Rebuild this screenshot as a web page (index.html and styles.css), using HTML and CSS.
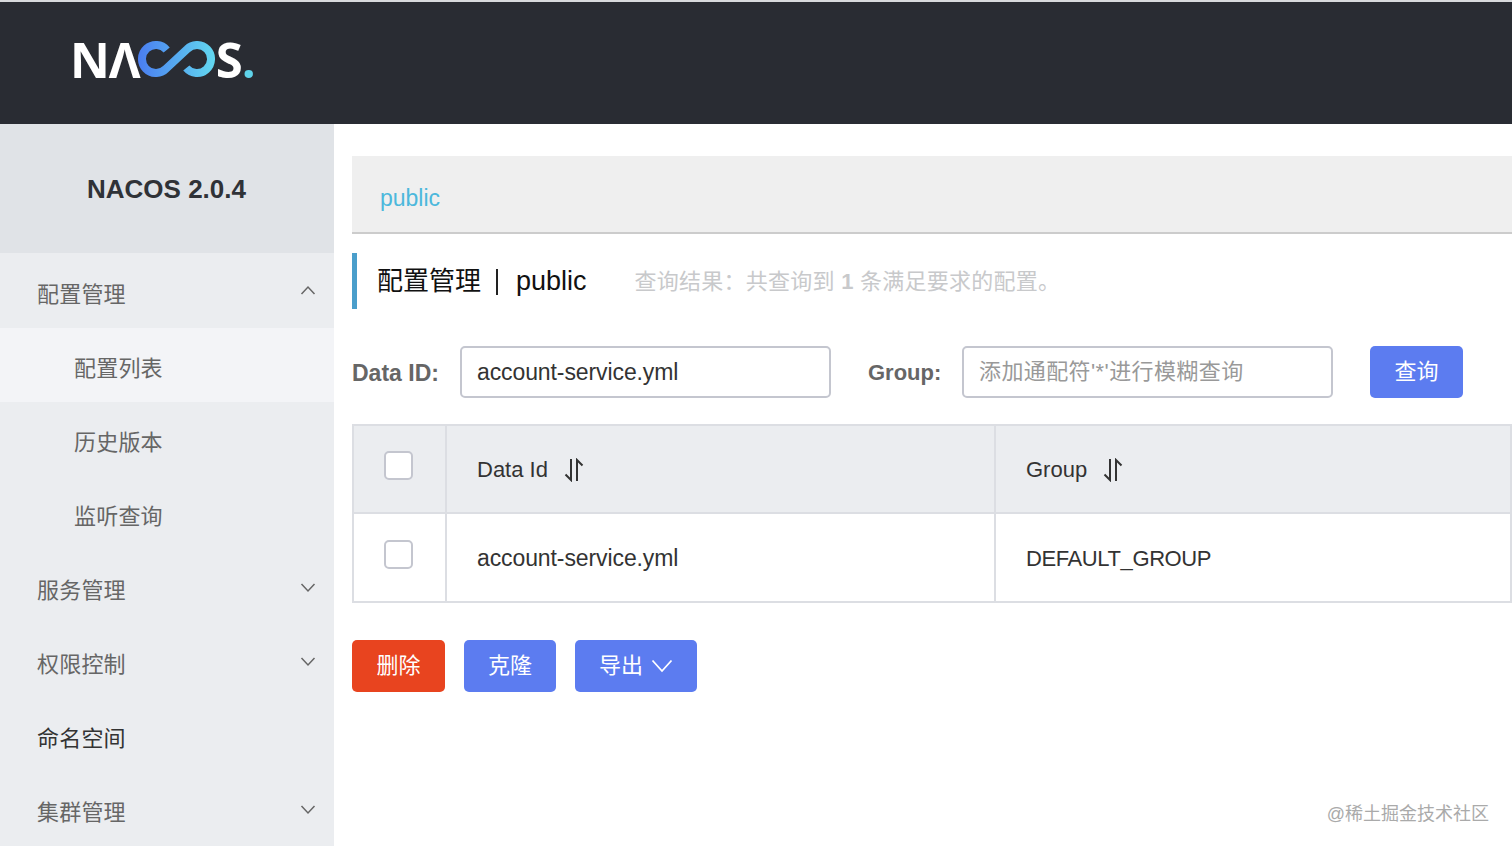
FILE: index.html
```html
<!DOCTYPE html>
<html>
<head>
    <title>Nacos</title>
    <link rel="stylesheet" href="styles.css">
</head>
<body>
    <div class="header">
        <div class="logo">
            <span>NΛ</span>
            <svg class="logo-loop" width="77" height="36" viewBox="0 0 77 36">
                <defs>
                    <linearGradient id="loop" gradientUnits="userSpaceOnUse" x1="0" y1="0" x2="77" y2="0">
                        <stop offset="0" stop-color="#4a7df0"/>
                        <stop offset="1" stop-color="#62d8f0"/>
                    </linearGradient>
                </defs>
                <path d="M28.700 9 A14 14 0 1 0 27.900 27.900 L49.100 8.100 A14 14 0 1 1 48.300 27" fill="none" stroke="url(#loop)" stroke-width="8"/>
            </svg>
            <span>S</span><span class="logo-dot">.</span>
        </div>
    </div>
    <div class="layout">
        <div class="sidebar">
            <div class="sidebar-title">NACOS 2.0.4</div>
            <div class="menu-item">配置管理
                <svg class="chevron up" width="16" height="10" viewBox="0 0 16 10"><path d="M1.500 9 L8 2 L14.500 9"/></svg>
            </div>
            <div class="menu-item sub active">配置列表</div>
            <div class="menu-item sub">历史版本</div>
            <div class="menu-item sub">监听查询</div>
            <div class="menu-item">服务管理
                <svg class="chevron" width="16" height="10" viewBox="0 0 16 10"><path d="M1.500 1 L8 8 L14.500 1"/></svg>
            </div>
            <div class="menu-item">权限控制
                <svg class="chevron" width="16" height="10" viewBox="0 0 16 10"><path d="M1.500 1 L8 8 L14.500 1"/></svg>
            </div>
            <div class="menu-item dark">命名空间</div>
            <div class="menu-item">集群管理
                <svg class="chevron" width="16" height="10" viewBox="0 0 16 10"><path d="M1.500 1 L8 8 L14.500 1"/></svg>
            </div>
        </div>
        <div class="main">
            <div class="namespace"><a class="namespace-link">public</a></div>
            <div class="page-title">
                <span class="page-name">配置管理</span>
                <span class="page-sep"></span>
                <span class="page-ns">public</span>
                <span class="page-hint">查询结果：共查询到 <b>1</b> 条满足要求的配置。</span>
            </div>
            <div class="search">
                <label class="search-label">Data ID:</label>
                <div class="field">account-service.yml</div>
                <label class="search-label group-label">Group:</label>
                <div class="field placeholder">添加通配符'*'进行模糊查询</div>
                <div class="btn primary search-btn">查询</div>
            </div>
            <table class="config-table">
                <tr class="head">
                    <td class="check-col"><span class="checkbox"></span></td>
                    <td class="id-col">Data Id
                        <svg class="sort" width="20" height="24" viewBox="0 0 20 24"><path d="M7 1 V22 L1.500 16.500 M13 23 V2 L18.500 7.500"/></svg>
                    </td>
                    <td>Group
                        <svg class="sort" width="20" height="24" viewBox="0 0 20 24"><path d="M7 1 V22 L1.500 16.500 M13 23 V2 L18.500 7.500"/></svg>
                    </td>
                </tr>
                <tr>
                    <td class="check-col"><span class="checkbox"></span></td>
                    <td class="id-col cell-id">account-service.yml</td>
                    <td class="cell-group">DEFAULT_GROUP</td>
                </tr>
            </table>
            <div class="actions">
                <div class="btn danger">删除</div>
                <div class="btn primary clone">克隆</div>
                <div class="btn primary export">导出
                    <svg width="22" height="14" viewBox="0 0 22 14"><path d="M1.500 1.500 L11 12 L20.500 1.500"/></svg>
                </div>
            </div>
        </div>
    </div>
    <div class="watermark">@稀土掘金技术社区</div>
</body>
</html>
```

FILE: styles.css
```css
html, body {
    margin: 0;
    height: 100%;
    overflow: hidden;
}
body {
    font-family: "Liberation Sans", "Noto Sans CJK SC", sans-serif;
    color: #333;
    background-color: #fff;
}
.header {
    height: 114px;
    background-color: #292c33;
    border-top: 2px solid #d8dadd;
    display: flex;
    align-items: center;
    padding: 0 0 8px 70px;
}
.logo {
    display: flex;
    align-items: center;
    font-family: "Open Sans", "Liberation Sans", sans-serif;
    font-size: 49px;
    font-weight: 700;
    line-height: 50px;
    color: #fff;
    letter-spacing: -1px;
}
.logo-loop {
    margin: 0 1px 0 -2px;
}
.logo-dot {
    color: #5fd3ea;
}
.layout {
    display: flex;
    height: 722px;
}
.sidebar {
    width: 334px;
    flex-shrink: 0;
    background-color: #ebedf0;
}
.sidebar-title {
    height: 129px;
    line-height: 130px;
    padding-right: 1px;
    text-align: center;
    font-size: 26px;
    font-weight: bold;
    color: #2f3237;
    background-color: #e0e3e7;
}
.menu-item {
    height: 72px;
    display: flex;
    align-items: center;
    justify-content: space-between;
    padding: 2px 18px 0 37px;
    font-size: 22px;
    letter-spacing: 0.200px;
    color: #666;
}
.menu-item:nth-child(2) {
    margin-top: 1px;
}
.sub {
    padding-left: 74px;
}
.active {
    background-color: #f3f4f7;
}
.dark {
    color: #333;
}
.chevron {
    margin-top: 0;
}
.chevron.up {
    margin-top: -4px;
}
.chevron path {
    fill: none;
    stroke: #666;
    stroke-width: 1.500;
}
.main {
    flex: 1;
    min-width: 0;
    padding: 32px 0 0 18px;
}
.namespace {
    height: 76px;
    background-color: #efefef;
    border-bottom: 2px solid #ccc;
    padding-left: 28px;
    font-size: 23px;
    line-height: 84px;
}
.namespace-link {
    color: #4cb8dc;
}
.page-title {
    margin-top: 19px;
    height: 56px;
    border-left: 5px solid #4a9ecb;
    padding-left: 20px;
    display: flex;
    align-items: center;
    color: #111;
}
.page-name {
    font-size: 26px;
    margin-bottom: 6px;
}
.page-sep {
    width: 2px;
    height: 26px;
    margin: 2px 18px 0 15px;
    background-color: #222;
}
.page-ns {
    font-size: 27px;
}
.page-hint {
    margin: 0 0 4px 48px;
    font-size: 22px;
    letter-spacing: 0.250px;
    color: #c8c9cb;
}
.search {
    margin-top: 37px;
    display: flex;
    align-items: center;
}
.search-label {
    width: 108px;
    font-size: 23px;
    font-weight: bold;
    color: #666;
    padding-top: 2px;
}
.group-label {
    width: 94px;
    margin-left: 37px;
    font-size: 22px;
}
.field {
    height: 48px;
    line-height: 48px;
    padding: 0 0 0 15px;
    width: 352px;
    border: 2px solid #c4c6cf;
    border-radius: 5px;
    font-size: 23px;
    letter-spacing: -0.100px;
    color: #333;
}
.placeholder {
    font-size: 22px;
    line-height: 47px;
    letter-spacing: 0.400px;
    color: #999;
}
.btn {
    width: 93px;
    height: 52px;
    line-height: 52px;
    text-align: center;
    border-radius: 5px;
    font-size: 22px;
    color: #fff;
}
.primary {
    background-color: #5c7cf0;
}
.danger {
    background-color: #e8441f;
}
.search-btn {
    margin-left: 37px;
}
.config-table {
    margin-top: 26px;
    width: 100%;
    table-layout: fixed;
    border-collapse: collapse;
    border: 2px solid #dcdee3;
    font-size: 22px;
    color: #333;
}
.config-table td {
    height: 85px;
    padding: 2px 0 0 30px;
    border: 2px solid #dcdee3;
}
.config-table .head td {
    height: 84px;
    background-color: #ebedf0;
}
.cell-id {
    font-size: 23px;
    letter-spacing: -0.100px;
}
.cell-group {
    letter-spacing: -0.400px;
}
.check-col {
    width: 61px;
}
.id-col {
    width: 517px;
}
.checkbox {
    display: block;
    width: 25px;
    height: 25px;
    margin: -8px 0 0;
    background-color: #fff;
    border: 2px solid #c4c6cf;
    border-radius: 5px;
}
.head .checkbox {
    margin-top: -10px;
}
.sort {
    margin-left: 10px;
    vertical-align: -5px;
}
.sort path {
    fill: none;
    stroke: #333;
    stroke-width: 2;
}
.actions {
    margin-top: 37px;
    display: flex;
    gap: 19px;
}
.clone {
    width: 92px;
}
.export {
    width: 122px;
    display: flex;
    align-items: center;
    justify-content: center;
    gap: 8px;
}
.export path {
    fill: none;
    stroke: #fff;
    stroke-width: 1.800;
}
.watermark {
    position: absolute;
    right: 23px;
    bottom: 21px;
    font-size: 18px;
    color: #aaa;
}
```
